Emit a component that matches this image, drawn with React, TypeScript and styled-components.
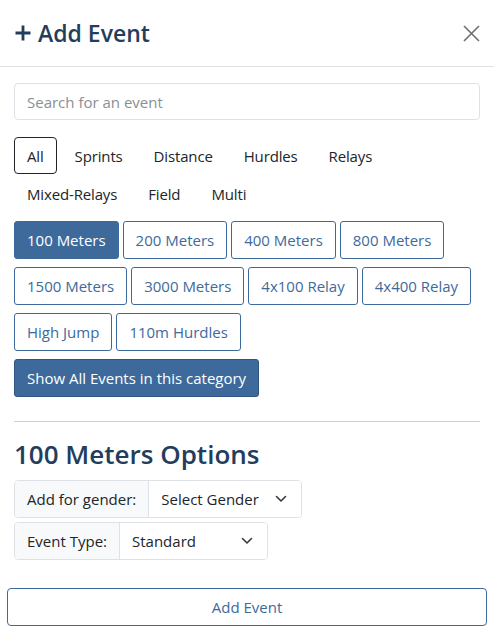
import { useState } from 'react'
import styled, { createGlobalStyle } from 'styled-components'

const GlobalStyle = createGlobalStyle`
  * { box-sizing: border-box; }
  body {
    margin: 0;
    background: #fff;
    font-family: 'Open Sans', 'Noto Sans', sans-serif;
    font-size: 15px;
    color: #212529;
  }
`

const BLUE = '#3e6a9b'
const NAVY = '#233d5d'

const Modal = styled.div`
  width: 494px;
  min-height: 634px;
  display: flex;
  flex-direction: column;
`

const Header = styled.div`
  height: 67px;
  padding: 0 14px;
  display: flex;
  align-items: center;
  justify-content: space-between;
  border-bottom: 1px solid #dee2e6;
`

const Title = styled.h1`
  margin: 0;
  display: flex;
  align-items: center;
  gap: 6px;
  font-size: 23px;
  font-weight: 600;
  color: ${NAVY};
`

const CloseButton = styled.button`
  border: none;
  background: none;
  padding: 0;
  width: 18px;
  height: 18px;
  display: flex;
  align-items: center;
  justify-content: center;
  cursor: pointer;
`

const Body = styled.div`
  padding: 16px 14px 0;
`

const Search = styled.input`
  width: 100%;
  height: 37px;
  padding: 0 12px;
  border: 1px solid #dee2e6;
  border-radius: 4px;
  font-family: inherit;
  font-size: 15px;
  color: #212529;
  outline: none;

  &::placeholder {
    color: #8a8f94;
  }
`

const Tabs = styled.div`
  margin-top: 17px;
  display: flex;
  flex-wrap: wrap;
  column-gap: 5px;
  row-gap: 1px;
`

const Tab = styled.button<{ $active?: boolean }>`
  height: 37px;
  padding: 0 12px;
  background: #fff;
  border: 1px solid ${p => (p.$active ? '#212529' : 'transparent')};
  border-radius: 4px;
  font-family: inherit;
  font-size: 15px;
  letter-spacing: -0.15px;
  color: #212529;
  cursor: pointer;
`

const EventGrid = styled.div`
  margin-top: 9px;
  display: flex;
  flex-wrap: wrap;
  column-gap: 4px;
  row-gap: 8px;
`

const EventButton = styled.button<{ $selected?: boolean }>`
  height: 38px;
  padding: 0 12px;
  border: 1px solid ${BLUE};
  border-radius: 3px;
  background: ${p => (p.$selected ? BLUE : '#fff')};
  color: ${p => (p.$selected ? '#fff' : BLUE)};
  font-family: inherit;
  font-size: 15px;
  cursor: pointer;
`

const ShowAllButton = styled(EventButton)`
  margin-top: 8px;
  background: ${BLUE};
  color: #fff;
  border-color: #2f5580;
`

const Divider = styled.hr`
  margin: 24px 0 0;
  border: none;
  border-top: 1px solid #cfd1d4;
`

const OptionsTitle = styled.h2`
  margin: 17px 0 10px;
  font-size: 26px;
  font-weight: 600;
  color: ${NAVY};
  line-height: 1.2;
`

const InputGroup = styled.div`
  display: inline-flex;
  height: 38px;
  border: 1px solid #dee2e6;
  border-radius: 4px;
  overflow: hidden;
  margin-bottom: 4px;
`

const GroupLabel = styled.span`
  display: flex;
  align-items: center;
  padding: 0 12px;
  background: #f8f9fa;
  border-right: 1px solid #dee2e6;
  color: #212529;
`

const SelectBox = styled.div<{ $width: number }>`
  width: ${p => p.$width}px;
  display: flex;
  align-items: center;
  justify-content: space-between;
  padding: 0 14px 0 12px;
  color: #212529;
  background: #fff;
`

const Footer = styled.div`
  padding: 24px 7px 8px;
`

const AddButton = styled.button`
  width: 100%;
  height: 38px;
  border: 1px solid ${BLUE};
  border-radius: 4px;
  background: #fff;
  color: ${BLUE};
  font-family: inherit;
  font-size: 15px;
  cursor: pointer;
`

const categories = ['All', 'Sprints', 'Distance', 'Hurdles', 'Relays', 'Mixed-Relays', 'Field', 'Multi']
const events = [
  '100 Meters', '200 Meters', '400 Meters', '800 Meters',
  '1500 Meters', '3000 Meters', '4x100 Relay', '4x400 Relay',
  'High Jump', '110m Hurdles',
]

const Chevron = () => (
  <svg width="12" height="8" viewBox="0 0 12 8" fill="none">
    <path d="M1.5 1.5l4.5 4.5 4.5-4.5" stroke="#343a40" strokeWidth="1.6" strokeLinecap="round" strokeLinejoin="round" />
  </svg>
)

export default function App() {
  const [category, setCategory] = useState('All')
  const [selected, setSelected] = useState('100 Meters')

  return (
    <Modal>
      <GlobalStyle />
      <Header>
        <Title>
          <svg width="18" height="18" viewBox="0 0 18 18">
            <path d="M9 1.5v15M1.5 9h15" stroke={NAVY} strokeWidth="2.8" />
          </svg>
          Add Event
        </Title>
        <CloseButton aria-label="Close">
          <svg width="17" height="17" viewBox="0 0 17 17">
            <path d="M1 1l15 15M16 1L1 16" stroke="#6c6f73" strokeWidth="1.6" />
          </svg>
        </CloseButton>
      </Header>

      <Body>
        <Search placeholder="Search for an event" />

        <Tabs>
          {categories.map(c => (
            <Tab key={c} $active={c === category} onClick={() => setCategory(c)}>
              {c}
            </Tab>
          ))}
        </Tabs>

        <EventGrid>
          {events.map(e => (
            <EventButton key={e} $selected={e === selected} onClick={() => setSelected(e)}>
              {e}
            </EventButton>
          ))}
        </EventGrid>
        <ShowAllButton>Show All Events in this category</ShowAllButton>

        <Divider />

        <OptionsTitle>{selected} Options</OptionsTitle>
        <div>
          <InputGroup>
            <GroupLabel>Add for gender:</GroupLabel>
            <SelectBox $width={152}>
              Select Gender <Chevron />
            </SelectBox>
          </InputGroup>
        </div>
        <div>
          <InputGroup>
            <GroupLabel>Event Type:</GroupLabel>
            <SelectBox $width={147}>
              Standard <Chevron />
            </SelectBox>
          </InputGroup>
        </div>
      </Body>

      <Footer>
        <AddButton>Add Event</AddButton>
      </Footer>
    </Modal>
  )
}
